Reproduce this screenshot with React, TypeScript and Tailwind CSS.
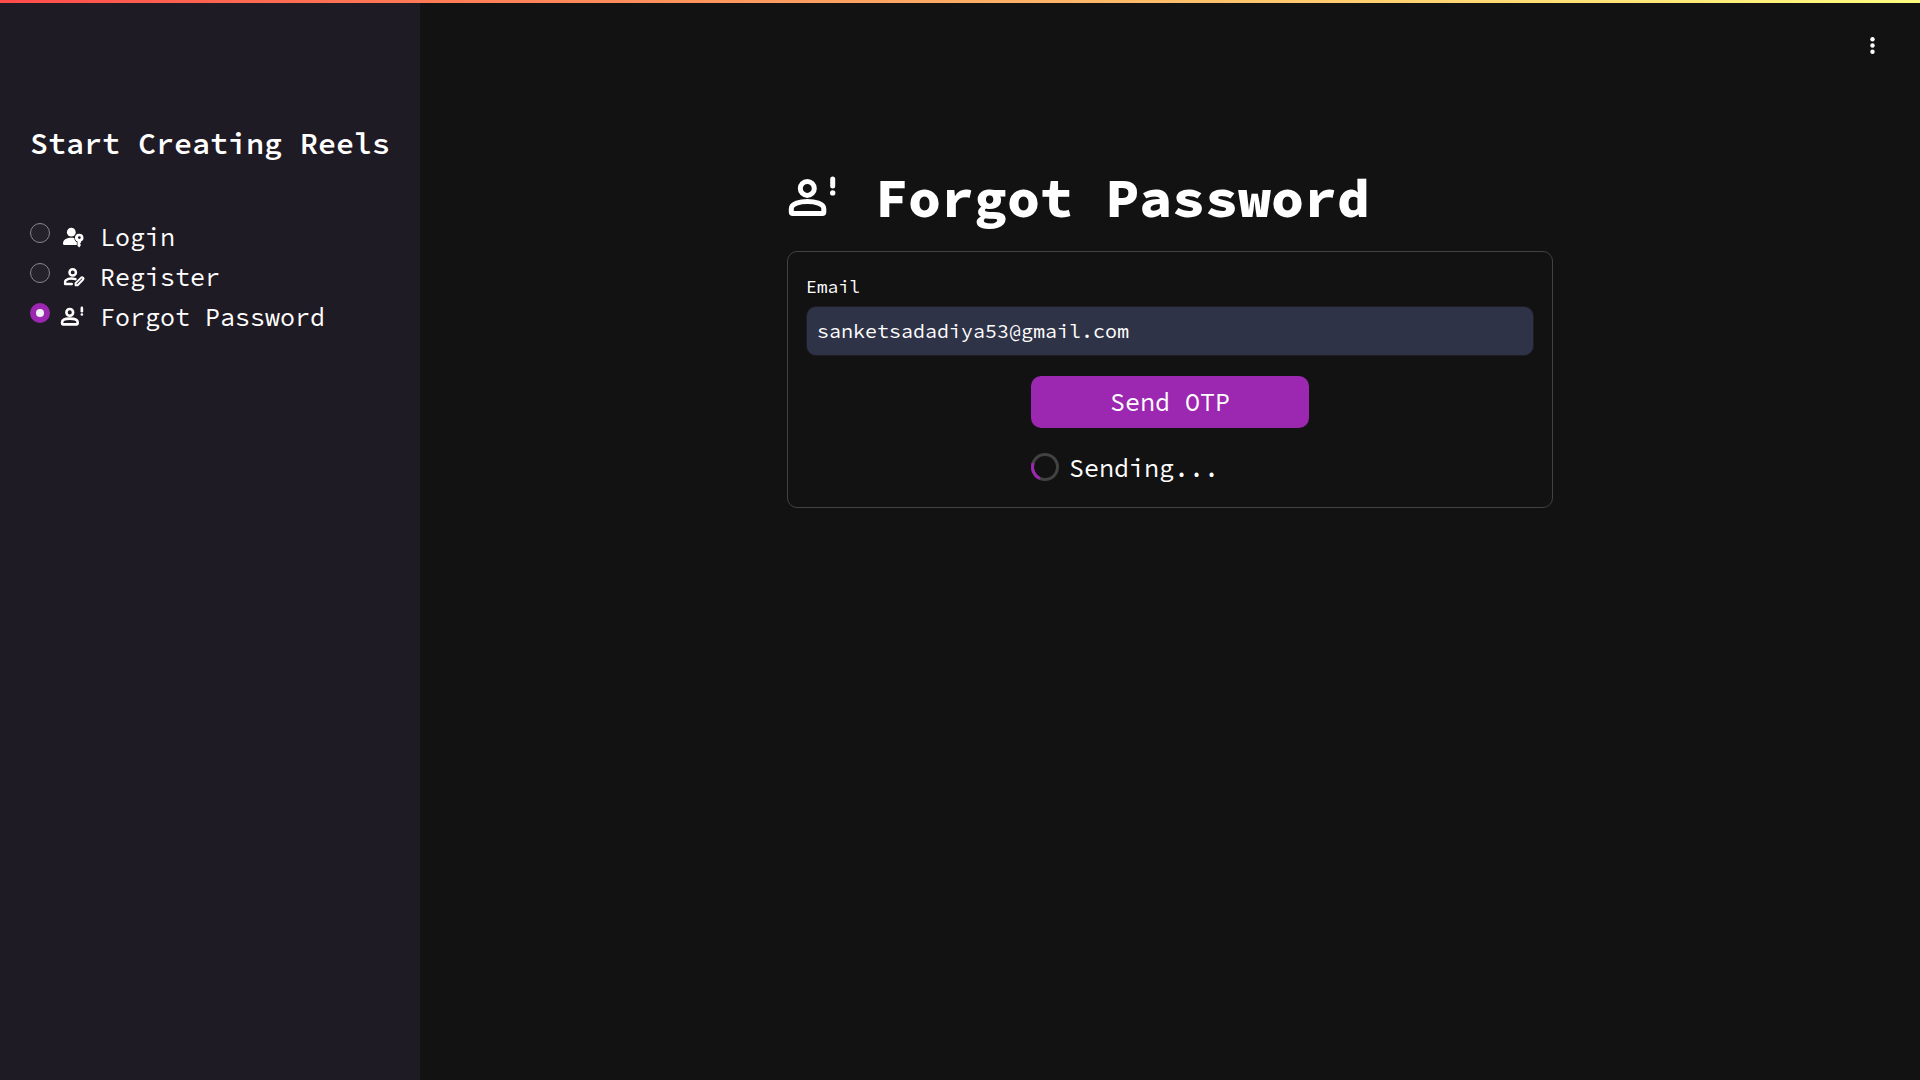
import React from "react";

const mono = "font-['Source_Code_Pro','Liberation_Mono',monospace]";

type IconProps = { className?: string; weight?: number };

function PersonAlertIcon({ className, weight = 5 }: IconProps) {
  return (
    <svg viewBox="0 0 50 42" className={className} fill="none" stroke="currentColor" strokeWidth={weight} aria-hidden="true">
      <circle cx="20.300" cy="13.400" r="7" />
      <path
        d="M4.300 37v-3.200C4.300 28.500 13.300 26.600 20.400 26.600s16.400 1.900 16.400 7.200V37q0 1.500-1.500 1.500H5.800q-1.500 0-1.500-1.500z"
        strokeLinejoin="round"
      />
      <path d="M45.700 4v7" strokeLinecap="round" />
      <circle cx="45.700" cy="17.900" r="2.700" fill="currentColor" stroke="none" />
    </svg>
  );
}

function PersonKeyIcon({ className }: IconProps) {
  return (
    <svg viewBox="0 0 24 24" className={className} fill="currentColor" aria-hidden="true">
      <circle cx="10.300" cy="6.200" r="4.400" />
      <path d="M2 17.300C2 13.200 6.500 11.700 10.300 11.700c1.200 0 2 .1 2.900.3.200 1.900 1.200 3.500 2.600 4.300V19H3.300Q2 19 2 17.800z" />
      <path
        fillRule="evenodd"
        d="M18.400 7.700a4 4 0 0 1 1.600 7.700v1.200l-1 1.200 1 1.200-1.800 2.400-1.700-1.700v-4.300a4 4 0 0 1 1.900-7.700zm0 2.500a1.400 1.400 0 1 0 0 2.800 1.400 1.400 0 0 0 0-2.800z"
      />
    </svg>
  );
}

function PersonEditIcon({ className }: IconProps) {
  return (
    <svg viewBox="0 0 24 24" className={className} fill="none" stroke="currentColor" aria-hidden="true">
      <circle cx="11.700" cy="6.400" r="3.200" strokeWidth="2.500" />
      <path d="M14.500 13.200C11 12.100 7 12.700 4.900 14.200q-.8.700-.8 1.700v2.100h6.700" strokeWidth="2.400" strokeLinecap="round" strokeLinejoin="round" />
      <path d="M14.600 19.300v-2.200l5.600-5.500q.9-.7 1.800.1t.1 1.800l-5.500 5.800z" strokeWidth="2" strokeLinejoin="round" />
    </svg>
  );
}

const options = [
  { id: "login", label: "Login", icon: <PersonKeyIcon className="mt-1 h-6 w-6" /> },
  { id: "register", label: "Register", icon: <PersonEditIcon className="mt-1 h-6 w-6" /> },
  { id: "forgot", label: "Forgot Password", icon: <PersonAlertIcon className="mt-1 -ml-px h-5 w-6" weight={5.5} /> },
];

export default function App() {
  const [page, setPage] = React.useState("forgot");
  return (
    <div className={`flex min-h-screen flex-col bg-[#121212] text-white ${mono}`}>
      <div className="h-[3px] bg-linear-to-r from-[#ff4b4b] to-[#fffd80]" />
      <div className="flex flex-1">
        <aside className="w-[420px] shrink-0 bg-[#1f1b24] px-[30px] pt-[116px]">
          <h2 className="text-[30px] leading-[48px] font-semibold whitespace-nowrap">Start Creating Reels</h2>
          <div role="radiogroup" aria-label="Account" className="mt-[51px]">
            {options.map((o) => (
              <label key={o.id} className="flex h-10 cursor-pointer items-start">
                <input
                  type="radio"
                  name="page"
                  checked={page === o.id}
                  onChange={() => setPage(o.id)}
                  className="mt-[5px] h-5 w-5 shrink-0 appearance-none rounded-full border border-[#88858b] bg-[#26222b] checked:border-[6px] checked:border-[#9c27b0] checked:bg-[#f0f2f6]"
                />
                <span className="mt-1 ml-[11px] w-[39px] shrink-0">{o.icon}</span>
                <span className="text-[25px] leading-[38px] whitespace-nowrap">{o.label}</span>
              </label>
            ))}
          </div>
        </aside>
        <main className="flex-1">
          <header className="flex h-[84px] justify-end pt-[30px] pr-[36px]">
            <button type="button" aria-label="Main menu" className="h-6 w-6">
              <svg viewBox="0 0 24 24" className="h-6 w-6" fill="currentColor" aria-hidden="true">
                <circle cx="12.500" cy="9.300" r="2.200" transform="translate(0 -3)" />
                <circle cx="12.500" cy="12.500" r="2.200" />
                <circle cx="12.500" cy="18.700" r="2.200" />
              </svg>
            </button>
          </header>
          <div className="mx-auto w-full max-w-[766px] pt-[78px]">
            <h1 className="flex h-[86px] items-start text-[55px] leading-[66px] font-extrabold whitespace-nowrap">
              <PersonAlertIcon className="mt-[10px] mr-[38px] h-[42px] w-[50px] shrink-0" />
              Forgot Password
            </h1>
            <form className="rounded-[10px] border border-[#424242] px-[18px] py-[19px]" onSubmit={(e) => e.preventDefault()}>
              <label htmlFor="email" className="block pb-1 text-[18px] leading-[31px]">
                Email
              </label>
              <input
                id="email"
                type="email"
                defaultValue="sanketsadadiya53@gmail.com"
                className="block h-[50px] w-full rounded-[10px] border border-[#1f1b24] bg-[#2f3347] px-[10px] pb-[2px] text-[20px] outline-none"
              />
              <div className="mx-auto mt-5 w-[278px]">
                <button type="submit" className="h-[52px] w-full rounded-[10px] bg-[#9c27b0] text-[25px] leading-[40px]">
                  Send OTP
                </button>
                <div role="status" className="mt-5 flex h-10 items-start">
                  <svg viewBox="0 0 28 28" className="mt-[5px] mr-[10px] h-7 w-7" fill="none" strokeWidth="3" aria-hidden="true">
                    <circle cx="14" cy="14" r="12.500" stroke="#424242" />
                    <path d="M2.200 10A12.500 12.500 0 0 0 9 25.500" stroke="#9c27b0" />
                  </svg>
                  <span className="text-[25px] leading-[40px]">Sending...</span>
                </div>
              </div>
            </form>
          </div>
        </main>
      </div>
    </div>
  );
}
